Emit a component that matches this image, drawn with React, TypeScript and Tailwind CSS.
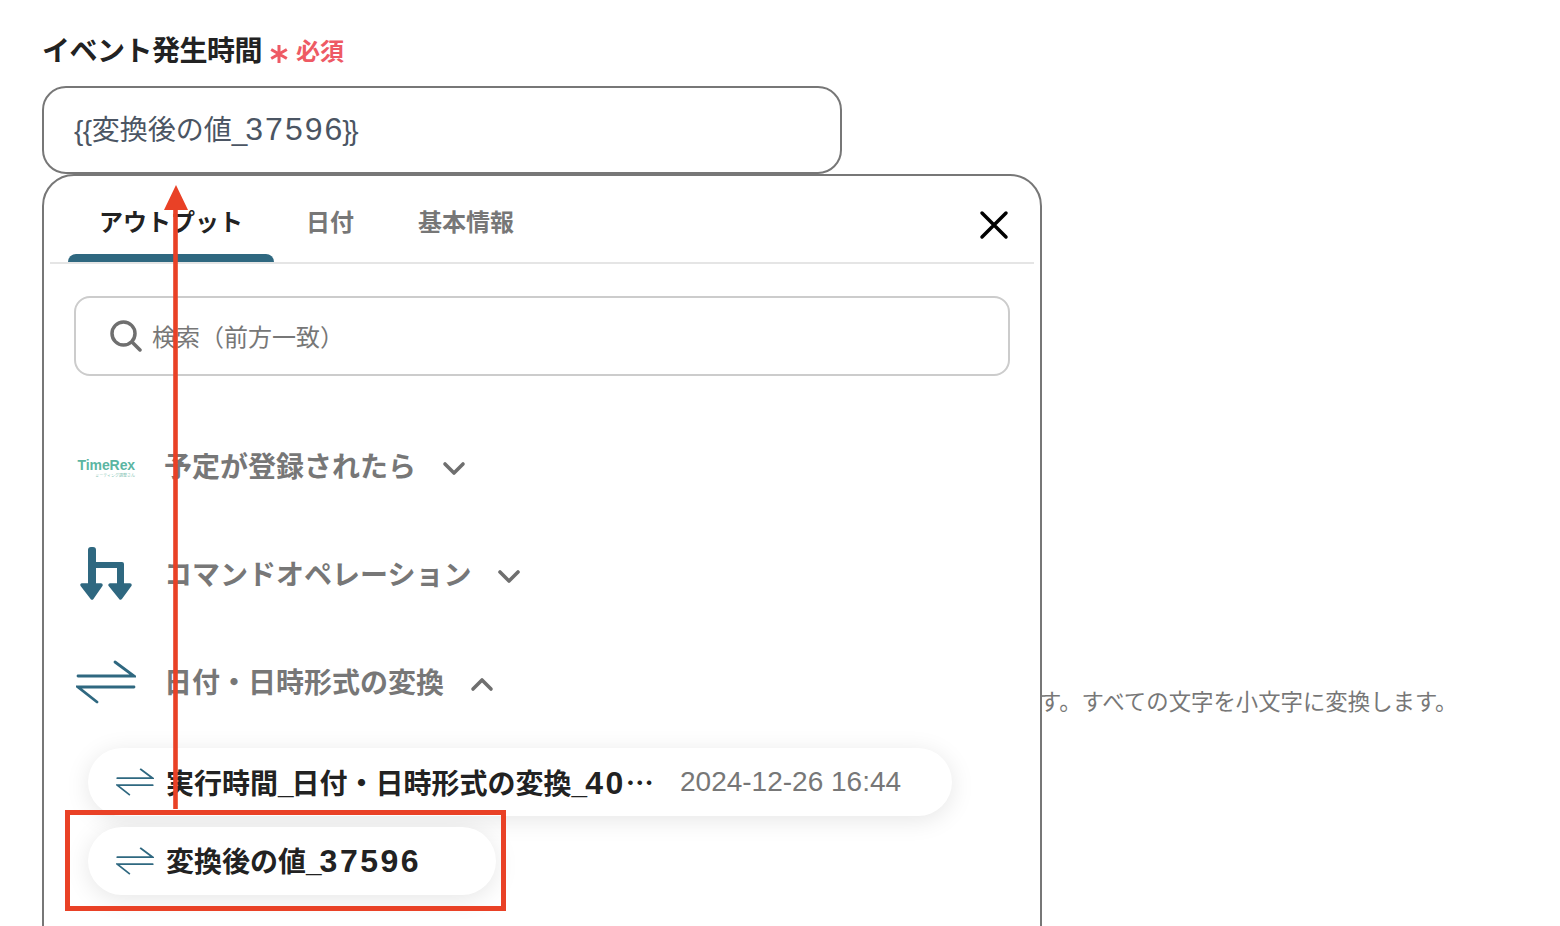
import React from "react";

const FONT = "font-['Liberation_Sans','Noto_Sans_CJK_JP',sans-serif]";

function Exchange({ className }: { className: string }) {
  return (
    <svg viewBox="0 0 60 60" fill="none" stroke="#2f6880" strokeWidth="2.800" strokeLinecap="round" className={className}>
      <path d="M2 24H58L39 10" />
      <path d="M58 35H2L21 50" />
    </svg>
  );
}

function Command() {
  return (
    <svg viewBox="0 0 60 60" fill="#2f6880" className="w-[60px] h-[60px] shrink-0">
      <path d="M12 6a3 3 0 0 1 3-3h2a3 3 0 0 1 3 3v12h26a2 2 0 0 1 2 2v22h-7V24H20v18h-8z" />
      <path d="M6 41H25L16 54Z" stroke="#2f6880" strokeWidth="3.500" strokeLinejoin="round" />
      <path d="M34 41H54L44.500 54Z" stroke="#2f6880" strokeWidth="3.500" strokeLinejoin="round" />
    </svg>
  );
}

function Chevron({ up }: { up?: boolean }) {
  return (
    <svg viewBox="0 0 24 24" fill="none" stroke="#6f6f6f" strokeWidth="3.600" strokeLinecap="round" strokeLinejoin="round" className="w-[24px] h-[24px] shrink-0">
      <path d={up ? "M3 17L12 8L21 17" : "M3 8L12 17L21 8"} />
    </svg>
  );
}

function Row({ icon, label, up, gap }: { icon: React.ReactNode; label: string; up?: boolean; gap: string }) {
  return (
    <div className="h-[108px] flex items-center">
      <div className="w-[60px] flex justify-center shrink-0">{icon}</div>
      <span className="ml-[28px] pt-[4px] text-[28px] font-bold text-[#777777] whitespace-nowrap">{label}</span>
      <span className={gap}>
        <Chevron up={up} />
      </span>
    </div>
  );
}

function Digits({ children, wide }: { children: string; wide?: boolean }) {
  return (
    <>
      <span className="tracking-[-2px]">_</span>
      <span className={wide ? "text-[32px] leading-[32px] tracking-[2.500px]" : "text-[32px] leading-[32px] tracking-[2px]"}>{children}</span>
    </>
  );
}

export default function App() {
  return (
    <div className={`relative w-[1560px] h-[926px] overflow-hidden bg-white ${FONT}`}>
      <div className="pl-[42px] pt-[30px]">
        <div className="h-[40px] flex items-center pt-[4px]">
          <span className="text-[28px] font-bold text-[#222222] tracking-[-0.5px] whitespace-nowrap">イベント発生時間</span>
          <svg viewBox="0 0 18 20" fill="none" stroke="#ee5a64" strokeWidth="3" className="ml-[8px] mt-[3px] w-[18px] h-[20px] shrink-0">
            <path d="M9 1V19M1.200 5.500L16.800 14.500M16.800 5.500L1.200 14.500" />
          </svg>
          <span className="ml-[8px] text-[24px] font-bold text-[#ee5a64] whitespace-nowrap">必須</span>
        </div>
        <div className="mt-[16px] w-[800px] h-[88px] rounded-[24px] border-2 border-[#777777] flex items-center pl-[30px] pt-[2px] text-[28px] text-[#4b5563]">
          <span className="whitespace-nowrap">
            <span className="tracking-[-0.5px]">{"{{"}</span>
            変換後の値
            <Digits>37596</Digits>
            <span className="-ml-[2px] tracking-[-2.500px]">{"}}"}</span>
          </span>
        </div>
        <p className="mt-[513px] ml-[997px] text-[22.4px] leading-[32px] text-[#777777] whitespace-nowrap">
          す。すべての文字を小文字に変換します。
        </p>
      </div>

      <div className="absolute left-[42px] top-[174px] w-[1000px] h-[800px] bg-white border-2 border-[#777777] rounded-t-[32px] px-[6px]">
        <div className="relative h-[88px] flex items-end border-b-2 border-[#e5e5e5]">
          <div className="w-[206px] ml-[18px] h-[86px] flex flex-col">
            <div className="flex-1 flex items-center justify-center pt-[16px] text-[24px] font-bold text-[#222222]">アウトプット</div>
            <div className="h-[8px] bg-[#2f6880] rounded-t-[8px]"></div>
          </div>
          <div className="ml-[32px] h-[78px] mb-[8px] pt-[16px] flex items-center text-[24px] font-bold text-[#777777]">日付</div>
          <div className="ml-[64px] h-[78px] mb-[8px] pt-[16px] flex items-center text-[24px] font-bold text-[#777777]">基本情報</div>
          <svg viewBox="0 0 30 30" fill="none" stroke="#000000" strokeWidth="3.500" strokeLinecap="round" className="absolute right-[25px] top-[34px] w-[30px] h-[30px]">
            <path d="M3 3L27 27M27 3L3 27" />
          </svg>
        </div>

        <div className="mt-[32px] mx-[24px] h-[80px] w-[936px] rounded-[16px] border-2 border-[#cccccc] flex items-center pl-[34px]">
          <svg viewBox="0 0 32 32" fill="none" stroke="#6f6f6f" strokeWidth="3.500" strokeLinecap="round" className="w-[32px] h-[32px] shrink-0">
            <circle cx="13.500" cy="13.500" r="11.500" />
            <path d="M22.500 22.500L30 30" />
          </svg>
          <span className="ml-[10px] pt-[4px] text-[24px] text-[#777777] whitespace-nowrap">検索（前方一致）</span>
        </div>

        <div className="mt-[36px] pl-[26px]">
          <Row
            icon={
              <div className="flex flex-col items-end w-[60px] pr-[1px] pt-[4px]">
                <span className="font-['Liberation_Sans',sans-serif] text-[14px] leading-[15px] font-bold tracking-[-0.1px] text-[#5bb5a2]">TimeRex</span>
                <span className="text-[4px] leading-[5px] text-[#7fbfb2] whitespace-nowrap">ミーティング調整さん</span>
              </div>
            }
            label="予定が登録されたら"
            gap="ml-[26px] pt-[4px]"
          />
          <Row icon={<Command />} label="コマンドオペレーション" gap="ml-[26px] pt-[4px]" />
          <Row icon={<Exchange className="w-[60px] h-[60px] shrink-0" />} label="日付・日時形式の変換" up gap="ml-[26px] pt-[4px]" />
        </div>

        <div className="mt-[12px] ml-[38px] flex flex-col items-start gap-[11px]">
          <div className="h-[68px] w-[864px] rounded-full bg-white shadow-[0_4px_24px_rgba(0,0,0,0.1)] flex items-center pl-[28px]">
            <Exchange className="w-[38px] h-[38px] shrink-0" />
            <span className="ml-[12px] w-[488px] pt-[3px] text-[28px] font-bold text-[#222222] whitespace-nowrap">
              実行時間<span className="tracking-[-2px]">_</span>日付・日時形式の変換<Digits wide>40</Digits>
              <span className="font-['Noto_Sans_CJK_JP',sans-serif]">…</span>
            </span>
            <span className="ml-[26px] text-[28px] text-[#777777] whitespace-nowrap">2024-12-26 16:44</span>
          </div>
          <div className="h-[68px] w-[408px] rounded-full bg-white shadow-[0_4px_24px_rgba(0,0,0,0.1)] flex items-center pl-[28px]">
            <Exchange className="w-[38px] h-[38px] shrink-0" />
            <span className="ml-[12px] pt-[3px] text-[28px] font-bold text-[#222222] whitespace-nowrap">
              変換後の値<Digits wide>37596</Digits>
            </span>
          </div>
        </div>
      </div>

      <svg viewBox="0 0 24 624" className="absolute left-[164px] top-[185px] w-[24px] h-[624px]">
        <path d="M12 0L24 25H13.800V624H9.200V25H0Z" fill="#e94126" />
      </svg>
      <div className="absolute left-[65px] top-[810px] w-[441px] h-[101px] border-[5px] border-[#e94126]"></div>
    </div>
  );
}
